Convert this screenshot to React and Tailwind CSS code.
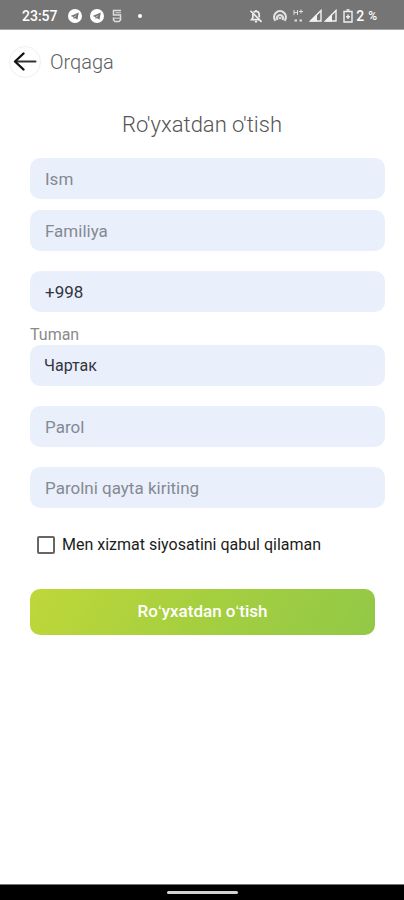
import React, { useState } from 'react';

const fieldClass =
  'block w-full h-[41px] rounded-[10px] bg-[#e9f0fc] px-[15px] text-[17px] text-[#33343c] placeholder:text-[#858991] placeholder:opacity-100 outline-none appearance-none';

const TelegramIcon = () => (
  <svg className="w-[14px] h-[14px]" viewBox="0 0 24 24" aria-hidden="true">
    <circle cx="12" cy="12" r="12" fill="#fff" />
    <path d="M4.5 12 18.5 6.2 16.2 18.5 11.8 15.5 9.8 17.5 9.2 13.5Z" fill="#757575" />
    <path d="m10 13.5 5-3.5-3.5 4.2" fill="#fff" />
  </svg>
);

const AppIcon = () => (
  <svg className="w-[10px] h-[14px]" viewBox="0 0 10 14" fill="none" stroke="#dedede" strokeWidth="1.5" aria-hidden="true">
    <path d="M9 1.5H1.5V6H8.500V11L7 12.500H3L1.500 11V8.500" />
    <path d="M3.500 3.800H9M1.500 9.200H8.500" strokeWidth="1" />
  </svg>
);

const BellOffIcon = () => (
  <svg className="w-[14px] h-[14px]" viewBox="0 0 24 24" fill="none" stroke="#ececec" strokeWidth="3" aria-hidden="true">
    <path d="M8 5.6C9 4.6 10.4 4 12 4c3.2 0 5.5 2.5 5.5 6v4.5M6.6 8.5V15L4.5 18H18M12 1.5V4" />
    <path d="M10 21.5h4M2.5 3l19 19" />
  </svg>
);

const HotspotIcon = () => (
  <svg className="w-[14px] h-[14px]" viewBox="0 0 24 24" fill="none" stroke="#e2e2e2" aria-hidden="true">
    <path d="M4.2 20A10 10 0 1 1 19.800 20" strokeWidth="4" />
    <path d="M8 18.500A5 5 0 1 1 16 18.500" strokeWidth="3.600" />
    <circle cx="12" cy="15.500" r="2" fill="#e2e2e2" stroke="none" />
  </svg>
);

const NetworkIcon = () => (
  <svg className="w-[10px] h-[14px]" viewBox="0 0 10 14" fill="none" stroke="#e0e0e0" aria-hidden="true">
    <path d="M1 1v5M4.5 1v5M1 3.5h3.5M6 2.5h4M8 .5v4" />
    <path d="M1.5 11.5h2.5M6.5 11.5H9" strokeWidth="2" />
  </svg>
);

const SignalIcon = () => (
  <svg className="w-[13px] h-[13px]" viewBox="0 0 13 13" aria-hidden="true">
    <path d="M1.5 12 12 1.5V12Z" fill="none" stroke="#f2f2f2" strokeWidth="1.4" />
    <path d="M1 12.5 8 5.5V12.5Z" fill="#f2f2f2" />
  </svg>
);

const BatteryIcon = () => (
  <svg className="w-[10px] h-[14px]" viewBox="0 0 10 14" fill="none" stroke="#f0f0f0" strokeWidth="1.4" aria-hidden="true">
    <path d="M1 2.5h8v10.5H1Z" />
    <path d="M3.5 1h3" strokeWidth="1.6" />
    <path d="M5 5.5v4.5M3 7.8h4" />
  </svg>
);

const StatusBar = () => (
  <div className="flex h-[30px] items-center justify-between border-b border-[#a5a5a5] bg-[#757575] pl-[22px] pr-[27px] pt-[2px] text-sm font-medium text-white">
    <div className="flex items-center">
      <span>23:57</span>
      <div className="ml-[10px] flex items-center gap-2">
        <TelegramIcon />
        <TelegramIcon />
        <AppIcon />
      </div>
      <span className="ml-4 h-1 w-1 rounded-full bg-white" />
    </div>
    <div className="flex items-center">
      <div className="flex items-center gap-[10px]">
        <BellOffIcon />
        <HotspotIcon />
      </div>
      <div className="mx-[6px] flex items-center gap-[6px]">
        <NetworkIcon />
        <div className="flex gap-[2px]">
          <SignalIcon />
          <SignalIcon />
        </div>
      </div>
      <BatteryIcon />
      <span className="ml-[3px] flex items-center gap-1">
        2 <span className="text-xs">%</span>
      </span>
    </div>
  </div>
);

const App = () => {
  const [form, setForm] = useState({
    name: '',
    surname: '',
    phone: '+998',
    district: 'Чартак',
    password: '',
    confirm: '',
  });
  const [accepted, setAccepted] = useState(false);

  const handleChange = (e) => {
    setForm({ ...form, [e.target.name]: e.target.value });
  };

  const handleSubmit = (e) => {
    e.preventDefault();
  };

  return (
    <div className="flex min-h-screen flex-col bg-white font-['Roboto',sans-serif]">
      <StatusBar />

      <header className="flex items-center gap-[9px] px-[9px] pt-4">
        <button
          type="button"
          aria-label="Orqaga"
          className="flex h-8 w-8 items-center justify-center rounded-full border border-[#f0f0f0] bg-white"
        >
          <svg className="h-6 w-6" viewBox="0 0 24 24" fill="none" strokeLinecap="round" strokeLinejoin="round">
            <path d="M22.5 11.5H3" stroke="#333" strokeWidth="2" />
            <path d="M10.500 3.500 2 11.500l8.500 8" stroke="#111" strokeWidth="2.400" />
          </svg>
        </button>
        <span className="text-xl font-light text-[#606060]">Orqaga</span>
      </header>

      <main className="flex-1">
        <h1 className="mt-[31px] text-center text-[22px] font-light leading-8 text-[#555555]">Ro'yxatdan o'tish</h1>

        <form onSubmit={handleSubmit} className="mt-[17px] pl-[30px] pr-[19px]">
          <div className="flex flex-col gap-[11px]">
            <input name="name" aria-label="Ism" placeholder="Ism" value={form.name} onChange={handleChange} className={fieldClass} />
            <input name="surname" aria-label="Familiya" placeholder="Familiya" value={form.surname} onChange={handleChange} className={fieldClass} />
          </div>

          <input type="tel" name="phone" aria-label="Telefon" value={form.phone} onChange={handleChange} className={`${fieldClass} mt-5`} />

          <label htmlFor="district" className="mt-[13px] block text-base leading-5 text-[#8a8a8a]">
            Tuman
          </label>
          <select
            id="district"
            name="district"
            value={form.district}
            onChange={handleChange}
            className="block h-[41px] w-full appearance-none rounded-[10px] bg-[#e9f0fc] px-[14px] text-base text-[#33343c] outline-none"
          >
            <option value="Чартак">Чартак</option>
          </select>

          <div className="mt-5 flex flex-col gap-5">
            <input type="password" name="password" aria-label="Parol" placeholder="Parol" value={form.password} onChange={handleChange} className={fieldClass} />
            <input type="password" name="confirm" aria-label="Parolni qayta kiriting" placeholder="Parolni qayta kiriting" value={form.confirm} onChange={handleChange} className={fieldClass} />
          </div>

          <label className="ml-[7px] mt-[25px] flex items-center gap-[7px] text-base text-[#1c1c1c]">
            <input
              type="checkbox"
              checked={accepted}
              onChange={(e) => setAccepted(e.target.checked)}
              className="h-[18px] w-[18px] appearance-none rounded-[2px] border-2 border-[#666666] checked:bg-[#9ccc3c]"
            />
            Men xizmat siyosatini qabul qilaman
          </label>

          <div className="mt-8 pr-[10px]">
            <button type="submit" className="h-[46px] w-full rounded-[10px] bg-linear-120 from-[#bfd739] via-[#a5cf3f] via-50% to-[#92c847] text-[17px] font-medium text-white">
              Roʻyxatdan oʻtish
            </button>
          </div>
        </form>
      </main>

      <footer className="flex h-4 items-center justify-center border-t border-[#777777] bg-black">
        <span className="h-[3px] w-[71px] rounded-full bg-[#d4d4d4]" />
      </footer>
    </div>
  );
};

export default App;
